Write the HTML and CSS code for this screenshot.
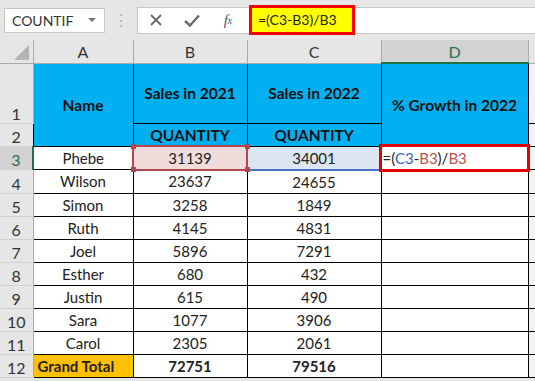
FILE: index.html
```html
<!DOCTYPE html>
<html lang="en">
<head>
<meta charset="UTF-8">
<title>Sales Growth</title>
<link rel="stylesheet" href="styles.css">
</head>
<body>
<div class="barra">
    <div class="nome">
        <span>COUNTIF</span>
        <span class="seta"></span>
    </div>
    <div class="pontos">⋮</div>
    <div class="formula">
        <div class="botoes">
            <span class="btn">
                <svg width="12" height="12" viewBox="0 0 12 12"><path d="M1 1L11 11M11 1L1 11" stroke="#6a6a6a" stroke-width="1.8"/></svg>
            </span>
            <span class="btn">
                <svg width="16" height="13" viewBox="0 0 16 13"><path d="M1 7L6 11.5L15 1.5" fill="none" stroke="#6a6a6a" stroke-width="2.4"/></svg>
            </span>
            <span class="btn fx"><i>f</i><sub>x</sub></span>
        </div>
        <div class="texto-formula">=(C3-B3)/B3</div>
    </div>
</div>

<table class="planilha">
    <colgroup>
        <col class="c-num"><col class="c-a"><col class="c-b"><col class="c-c"><col class="c-d"><col class="c-e">
    </colgroup>
    <tr class="cab">
        <th class="canto"><span class="triangulo"></span></th>
        <th>A</th><th>B</th><th>C</th><th class="ativo">D</th><th></th>
    </tr>
    <tr class="r1">
        <th class="num">1</th>
        <td class="azul" rowspan="2">Name</td>
        <td class="azul">Sales in 2021</td>
        <td class="azul">Sales in 2022</td>
        <td class="azul" rowspan="2">% Growth in 2022</td>
        <td class="vazio"></td>
    </tr>
    <tr>
        <th class="num">2</th>
        <td class="azul">QUANTITY</td>
        <td class="azul">QUANTITY</td>
        <td class="vazio"></td>
    </tr>
    <tr>
        <th class="num ativo">3</th>
        <td>Phebe</td>
        <td class="ref-b">31139<span class="alca a1"></span><span class="alca a2"></span><span class="alca a3"></span><span class="alca a4"></span></td>
        <td class="ref-c">34001</td>
        <td class="editando">=(<span class="azul-txt">C3</span>-<span class="verm-txt">B3</span>)/<span class="verm-txt">B3</span></td>
        <td class="vazio"></td>
    </tr>
    <tr><th class="num">4</th><td>Wilson</td><td>23637</td><td>24655</td><td></td><td class="vazio"></td></tr>
    <tr><th class="num">5</th><td>Simon</td><td>3258</td><td>1849</td><td></td><td class="vazio"></td></tr>
    <tr><th class="num">6</th><td>Ruth</td><td>4145</td><td>4831</td><td></td><td class="vazio"></td></tr>
    <tr><th class="num">7</th><td>Joel</td><td>5896</td><td>7291</td><td></td><td class="vazio"></td></tr>
    <tr><th class="num">8</th><td>Esther</td><td>680</td><td>432</td><td></td><td class="vazio"></td></tr>
    <tr><th class="num">9</th><td>Justin</td><td>615</td><td>490</td><td></td><td class="vazio"></td></tr>
    <tr><th class="num">10</th><td>Sara</td><td>1077</td><td>3906</td><td></td><td class="vazio"></td></tr>
    <tr><th class="num">11</th><td>Carol</td><td>2305</td><td>2061</td><td></td><td class="vazio"></td></tr>
    <tr class="total"><th class="num">12</th><td class="laranja">Grand Total</td><td>72751</td><td>79516</td><td></td><td class="vazio"></td></tr>
</table>
</body>
</html>
```

FILE: styles.css
```css
html { overflow: hidden; }
body { margin: 0; padding: 0; background: #e6e6e6; font-family: Lato, "Liberation Sans", sans-serif; width: 535px; height: 381px; overflow: hidden; }
.barra { height: 40px; display: flex; align-items: center; background: #e6e6e6; }
.nome { margin-left: 4px; width: 101px; height: 25px; background: #fff; border: 1px solid #c6c6c6; display: flex; align-items: center; justify-content: space-between; padding: 0 8px 0 7px; box-sizing: border-box; font-size: 14px; color: #333; }
.seta { width: 0; height: 0; border-left: 4px solid transparent; border-right: 4px solid transparent; border-top: 4px solid #777; }
.pontos { width: 32px; text-align: center; color: #b0b0b0; font-size: 16px; }
.formula { flex: 1; height: 25px; background: #fff; border: 1px solid #c6c6c6; border-right: none; display: flex; align-items: center; position: relative; }
.botoes { display: flex; align-items: center; width: 111px; }
.btn { width: 36px; display: flex; justify-content: center; align-items: center; }
.fx { font-family: "Liberation Serif", serif; color: #555; font-size: 15px; }
.fx sub { font-size: 10px; font-style: italic; vertical-align: -2px; }
.texto-formula { position: absolute; left: 111px; top: -3px; width: 94px; height: 24px; background: #ffff00; border: 3px solid #ff0000; font-size: 14px; color: #222; display: flex; align-items: center; padding-left: 6px; }

.planilha { border-collapse: collapse; table-layout: fixed; width: 535px; font-size: 15px; color: #222; }
.c-num { width: 33px; } .c-a { width: 100px; } .c-b { width: 114px; } .c-c { width: 134px; } .c-d { width: 147px; } .c-e { width: 7px; }
.planilha td { height: 22px; padding: 0; border: 1px solid #000; text-align: center; background: #fff; white-space: nowrap; overflow: visible; }
.planilha th { font-weight: normal; padding: 0; }
.cab th { height: 22px; background: #e6e6e6; border-right: 1px solid #ababab; border-bottom: 1px solid #ababab; font-size: 16px; color: #333; }
.cab th.ativo { background: #d2d2d2; color: #217346; border-bottom: 2px solid #217346; }
.canto { position: relative; }
.triangulo { position: absolute; right: 4px; bottom: 3px; width: 0; height: 0; border-left: 15px solid transparent; border-bottom: 15px solid #b4b4b4; }
.num { background: #e6e6e6; border-right: 1px solid #ababab; border-bottom: 1px solid #d0d0d0; color: #333; font-size: 16px; text-align: center; vertical-align: bottom; }
.num.ativo { background: #d2d2d2; color: #217346; border-right: 2px solid #217346; }
.r1 td { height: 59px; }
.azul { background: #00b0f0 !important; font-weight: bold; color: #111; font-size: 15.5px; }
.vazio { background: #f3f3f3 !important; border-right: none !important; }
.ref-b { position: relative; background: #f2dcdb !important; outline: 2px solid #b5454e; outline-offset: -1px; }
.ref-c { background: #dce6f1 !important; border-bottom: 2px solid #4472c4 !important; }
.alca { position: absolute; width: 5px; height: 5px; background: #b5454e; }
.a1 { left: -3px; top: -3px; } .a2 { right: -3px; top: -3px; } .a3 { left: -3px; bottom: -3px; } .a4 { right: -3px; bottom: -3px; }
.editando { text-align: left !important; padding-left: 1px !important; outline: 3px solid #e00000; outline-offset: -1px; }
.azul-txt { color: #3c64b4; }
.verm-txt { color: #c0504d; }
.total td { font-weight: bold; }
.laranja { background: #ffc000 !important; text-align: left !important; padding-left: 4px !important; }
```
